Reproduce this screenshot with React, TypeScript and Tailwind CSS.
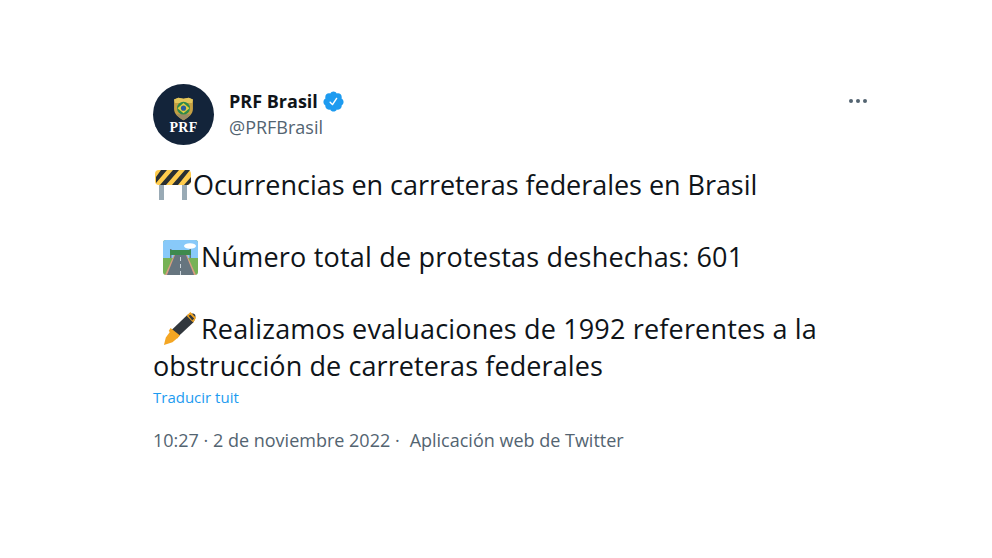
function Avatar() {
  return (
    <div className="w-[61px] h-[61px] rounded-full bg-[#13243a] flex flex-col items-center shrink-0">
      <svg width="21" height="24" viewBox="0 0 24 28" className="mt-[13px]">
        <path d="M1 3 L6 1 L12 2 L18 1 L23 3 L23 14 C23 20 18 24 12 27 C6 24 1 20 1 14 Z" fill="#c4a043" />
        <path d="M1 3 L6 1 L12 2 L18 1 L23 3 L22 7 H2 Z" fill="#e3c65a" />
        <path d="M4 20 C7 24 9 25 12 27 C15 25 17 24 20 20 Z" fill="#9a8a66" />
        <circle cx="12" cy="13" r="7.5" fill="#2f8a4a" />
        <path d="M12 7 L19 13 L12 19 L5 13 Z" fill="#e3cf3f" />
        <circle cx="12" cy="13" r="3" fill="#2a5d9c" />
      </svg>
      <span className="mt-[1px] text-[14px] leading-[12px] font-bold text-white font-['Liberation_Serif',serif] tracking-[0.3px]">PRF</span>
    </div>
  );
}

function VerifiedBadge() {
  return (
    <svg width="23" height="23" viewBox="0 0 24 24" className="shrink-0">
      <path
        fill="#1d9bf0"
        d="M22.5 12.5c0-1.58-.875-2.95-2.148-3.6.154-.435.238-.905.238-1.4 0-2.21-1.71-3.998-3.818-3.998-.47 0-.92.084-1.336.25C14.818 2.415 13.51 1.5 12 1.5s-2.816.917-3.437 2.25c-.415-.165-.866-.25-1.336-.25-2.11 0-3.818 1.79-3.818 4 0 .494.083.964.237 1.4-1.272.65-2.147 2.018-2.147 3.6 0 1.495.782 2.798 1.942 3.486-.02.17-.032.34-.032.514 0 2.21 1.708 4 3.818 4 .47 0 .92-.086 1.335-.25.62 1.334 1.926 2.25 3.437 2.25 1.512 0 2.818-.916 3.437-2.25.415.163.865.248 1.336.248 2.11 0 3.818-1.79 3.818-4 0-.174-.012-.344-.033-.513 1.158-.687 1.943-1.99 1.943-3.484zm-6.616-3.334l-4.334 6.5c-.145.217-.382.334-.625.334-.143 0-.288-.04-.416-.126l-.115-.094-2.415-2.415c-.293-.293-.293-.768 0-1.06s.768-.294 1.06 0l1.77 1.767 3.825-5.74c.23-.345.696-.436 1.04-.207.346.23.44.696.21 1.04z"
      />
    </svg>
  );
}

function BarrierEmoji() {
  return (
    <svg width="36" height="30" viewBox="0 0 36 30" className="shrink-0 ml-[2px]">
      <rect x="4" y="13" width="5" height="17" fill="#99aab5" />
      <rect x="27" y="13" width="5" height="17" fill="#99aab5" />
      <rect x="0" y="0" width="36" height="15" rx="4" fill="#ffcc4d" />
      <path d="M6 0 H12 L1 13 V7 Z M18 0 H24 L11 15 H5 Z M30 0 H35 L23 15 H17 Z M36 7 V12 L33 15 H29 Z" fill="#292f33" />
    </svg>
  );
}

function RoadEmoji() {
  return (
    <svg width="35" height="35" viewBox="0 0 35 35" className="shrink-0">
      <rect width="35" height="35" rx="3" fill="#77b255" />
      <path d="M0 3 a3 3 0 0 1 3 -3 H32 a3 3 0 0 1 3 3 V18 H0 Z" fill="#88c9f9" />
      <ellipse cx="27" cy="6" rx="6" ry="2.8" fill="#fff" />
      <rect x="7" y="9" width="1.5" height="9" fill="#66757f" />
      <rect x="26.5" y="9" width="1.5" height="9" fill="#66757f" />
      <rect x="7" y="10" width="21" height="5" fill="#3e8a4e" />
      <path d="M11 15 H24 L33 35 H2 Z" fill="#d99e82" />
      <path d="M12 15 H23 L31 35 H4 Z" fill="#66757f" />
      <path d="M17 17 H18 V21 H17 Z M17 24 H18 V28 H17 Z M17 31 H18 V35 H17 Z" fill="#ccd6dd" />
    </svg>
  );
}

function PenEmoji() {
  return (
    <svg width="34" height="34" viewBox="0 0 36 36" className="shrink-0 mr-[1px]">
      <path d="M1 35 L3 27 L8 20 L16 27 L10 32 Z" fill="#f4a623" />
      <path d="M8 20 L26 3 C29 1 33 1 34 3 C35 5 34 8 32 11 L15 27 Z" fill="#31373d" />
      <path d="M6 20 L8 17 L18 25 L15 28 Z" fill="#f4a623" />
      <path d="M25 4 L29 0 L35 6 L32 11 Z" fill="#f4a623" />
      <path d="M27 4 L29 3 L33 7 L31 9 Z" fill="#31373d" />
    </svg>
  );
}

export default function App() {
  return (
    <div className="w-[992px] h-[558px] bg-white pl-[153px] pr-[125px] pt-[84px] font-['Open_Sans','Noto_Sans',sans-serif]">
      <div className="flex items-start">
        <Avatar />
        <div className="ml-[16px] mt-[4px] flex-1">
          <div className="flex items-center gap-[4px] h-[26px]">
            <span className="text-[18px] font-bold text-[#0f1419] -ml-[1px]">PRF Brasil</span>
            <VerifiedBadge />
          </div>
          <div className="text-[18px] leading-[26px] text-[#536471] -ml-[1px]">@PRFBrasil</div>
        </div>
        <div className="mt-[15px] flex gap-[3px]">
          <span className="w-[4px] h-[4px] rounded-full bg-[#536471]" />
          <span className="w-[4px] h-[4px] rounded-full bg-[#536471]" />
          <span className="w-[4px] h-[4px] rounded-full bg-[#536471]" />
        </div>
      </div>

      <div className="mt-[22px] text-[27px] leading-[36px] text-[#0f1419]">
        <div className="flex items-center h-[36px]">
          <BarrierEmoji />
          <span className="ml-[2px] tracking-[-0.04px]">Ocurrencias en carreteras federales en Brasil</span>
        </div>
        <div className="h-[36px]" />
        <div className="flex items-center h-[36px] pl-[10px]">
          <RoadEmoji />
          <span className="ml-[3px] tracking-[0.2px]">Número total de protestas deshechas: 601</span>
        </div>
        <div className="h-[36px]" />
        <div className="flex items-center h-[36px] pl-[10px]">
          <PenEmoji />
          <span className="ml-[3px] tracking-[0.17px]">Realizamos evaluaciones de 1992 referentes a la</span>
        </div>
        <div className="h-[36px] pt-[1px] tracking-[0.09px]">obstrucción de carreteras federales</div>
      </div>

      <div className="mt-[4px] text-[15px] leading-[20px] text-[#1d9bf0]">Traducir tuit</div>

      <div className="mt-[20px] text-[18px] leading-[26px] text-[#536471] flex">
        <span>10:27 · 2 de noviembre 2022 ·</span>
        <span className="ml-[10px]">Aplicación web de Twitter</span>
      </div>
    </div>
  );
}
